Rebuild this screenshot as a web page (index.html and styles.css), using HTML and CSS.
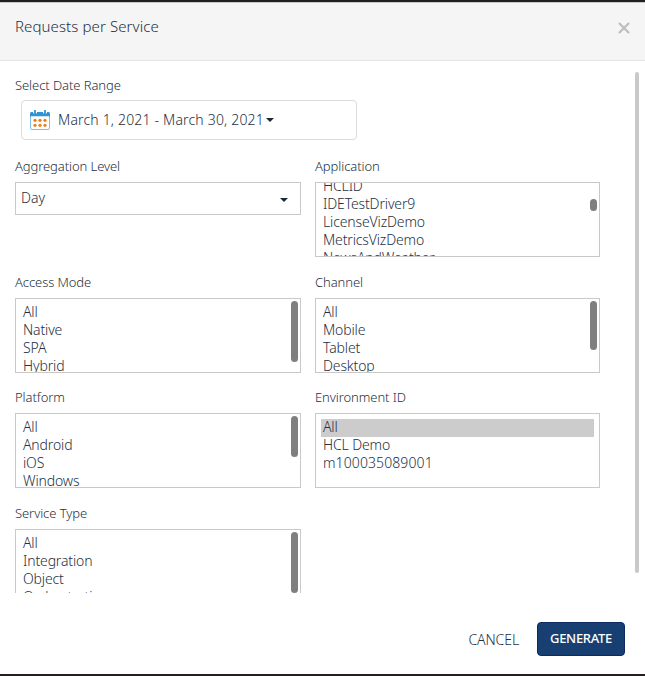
FILE: index.html
```html
<!DOCTYPE html>
<html lang="en">
<head>
<meta charset="utf-8">
<title>Requests per Service</title>
<link rel="stylesheet" href="styles.css">
</head>
<body>
<div class="dialog">
  <header class="header">
    <h1 class="title">Requests per Service</h1>
    <svg class="close" width="12" height="12" viewBox="0 0 12 12"><path d="M1.5 1.5l9 9M10.5 1.5l-9 9"/></svg>
  </header>
  <main class="body">
    <div class="form">
      <section class="range-field">
        <div class="label label-range">Select Date Range</div>
        <div class="range">
          <svg class="calendar" width="20" height="20" viewBox="0 0 20 20">
            <rect x=".5" y="2.5" width="19" height="17" rx="1.5" fill="#fff" stroke="#7fbdea"/>
            <path d="M0 6.2V3.5Q0 2 1.500 2h17Q20 2 20 3.500v2.700z" fill="#2f94d4"/>
            <path d="M5 .8v2.400M15 .8v2.400" stroke="#fff" stroke-width="4"/>
            <path d="M5 .8v2.400M15 .8v2.400" stroke="#3d9fda" stroke-width="2" stroke-linecap="round"/>
            <g fill="#ef7d1a"><circle cx="5" cy="10.300" r="1.600"/><circle cx="10" cy="10.300" r="1.600"/><circle cx="15" cy="10.300" r="1.600"/><circle cx="5" cy="15.300" r="1.600"/><circle cx="10" cy="15.300" r="1.600"/><circle cx="15" cy="15.300" r="1.600"/></g>
          </svg>
          <span class="range-text">March 1, 2021 - March 30, 2021</span>
          <span class="caret"></span>
        </div>
      </section>
      <div class="grid">
        <section class="field">
          <div class="label">Aggregation Level</div>
          <div class="select"><span class="select-text">Day</span><span class="caret"></span></div>
        </section>
        <section class="field">
          <div class="label">Application</div>
          <div class="list">
            <div class="options scrolled"><div>HCLID</div><div>IDETestDriver9</div><div>LicenseVizDemo</div><div>MetricsVizDemo</div><div>NewsAndWeather</div></div>
            <span class="thumb thumb-app"></span>
          </div>
        </section>
        <section class="field">
          <div class="label">Access Mode</div>
          <div class="list">
            <div class="options"><div>All</div><div>Native</div><div>SPA</div><div>Hybrid</div></div>
            <span class="thumb thumb-long"></span>
          </div>
        </section>
        <section class="field">
          <div class="label">Channel</div>
          <div class="list">
            <div class="options"><div>All</div><div>Mobile</div><div>Tablet</div><div>Desktop</div></div>
            <span class="thumb thumb-mid"></span>
          </div>
        </section>
        <section class="field">
          <div class="label">Platform</div>
          <div class="list">
            <div class="options"><div>All</div><div>Android</div><div>iOS</div><div>Windows</div></div>
            <span class="thumb thumb-short"></span>
          </div>
        </section>
        <section class="field">
          <div class="label">Environment ID</div>
          <div class="list">
            <div class="options full"><div class="selected">All</div><div>HCL Demo</div><div class="digits">m100035089001</div></div>
          </div>
        </section>
        <section class="field">
          <div class="label">Service Type</div>
          <div class="list">
            <div class="options"><div>All</div><div>Integration</div><div>Object</div><div>Orchestration</div></div>
            <span class="thumb thumb-long"></span>
          </div>
        </section>
      </div>
    </div>
    <span class="scrollbar"></span>
  </main>
  <footer class="footer">
    <span class="cancel">CANCEL</span>
    <span class="generate">GENERATE</span>
  </footer>
</div>
</body>
</html>
```

FILE: styles.css
```css
* { box-sizing: border-box; }
body {
  margin: 0;
  height: 676px;
  overflow: hidden;
  background: #231f20;
  color: #25303f;
  font-family: "Noto Sans", "Open Sans", sans-serif;
  font-weight: 300;
}
.dialog {
  display: flex;
  flex-direction: column;
  height: 676px;
  border-top: 2px solid #231f20;
  border-bottom: 2px solid #231f20;
  background: #fff;
}
.header {
  display: flex;
  justify-content: space-between;
  height: 59px;
  padding: 13px 15px 0;
  border-top: 1px solid #c8c8c8;
  border-bottom: 1px solid #e5e5e5;
  background: #f5f5f5;
}
.title {
  margin: 0;
  font-size: 15px;
  line-height: 20px;
  font-weight: 300;
  letter-spacing: .1px;
}
.close {
  margin: 6px 0 0;
  fill: none;
  stroke: #bdbdbd;
  stroke-width: 2;
  stroke-linecap: round;
}
.body {
  display: flex;
  justify-content: space-between;
  height: 532px;
  padding: 0 6px 0 15px;
  overflow: hidden;
}
.form { width: 585px; padding-top: 14px; }
.label {
  height: 20px;
  margin-bottom: 6px;
  font-size: 13px;
  line-height: 20px;
  letter-spacing: -.08px;
  white-space: nowrap;
}
.range {
  display: flex;
  align-items: center;
  width: 336px;
  height: 40px;
  margin: 0 0 15px 6px;
  padding-left: 8px;
  border: 1px solid #dcdcdc;
  border-radius: 4px;
}
.label-range { margin-bottom: 5px; }
.range { margin-bottom: 16px; }
.range-text {
  margin: -2px 2px 0 8px;
  font-size: 14px;
  letter-spacing: .18px;
  white-space: nowrap;
}
.caret {
  width: 0;
  border: 4px solid transparent;
  border-top-color: #1d2733;
  border-bottom-width: 0;
}
.grid {
  display: grid;
  grid-template-columns: 286px 285px;
  column-gap: 14px;
  grid-auto-rows: 115.5px;
}
.select {
  display: flex;
  align-items: center;
  justify-content: space-between;
  height: 33px;
  padding: 0 12px 0 5px;
  border: 1px solid #c9c9c9;
  font-size: 14px;
}
.select-text { margin-top: -2px; }
.select .caret { margin-top: 2px; }
.list {
  display: flex;
  justify-content: space-between;
  height: 75px;
  padding: 5px 2px 0 5px;
  border: 1px solid #c9c9c9;
  overflow: hidden;
}
.options {
  font-size: 14px;
  line-height: 16px;
  letter-spacing: -.14px;
  white-space: nowrap;
}
.options > div { height: 18px; padding-left: 2px; }
.options .digits { letter-spacing: .1px; }
.scrolled { margin-top: -10px; }
.full { flex: 1; margin-right: 3px; }
.selected { background: #ccc; }
.thumb {
  width: 7px;
  margin-top: -3px;
  border-radius: 4px;
  background: #7f7f7f;
}
.thumb-long { height: 61px; }
.thumb-mid { height: 49px; }
.thumb-short { height: 41px; }
.thumb-app { height: 12px; margin-top: 11px; }
.scrollbar {
  width: 4px;
  height: 501px;
  margin-top: 11px;
  border-radius: 2px;
  background: #c9c9c9;
}
.footer {
  display: flex;
  justify-content: flex-end;
  padding: 29px 20px 0 0;
  font-size: 14px;
}
.cancel { margin-right: 18px; line-height: 36px; letter-spacing: -.1px; }
.generate {
  width: 88px;
  height: 34px;
  border: 1px solid #0d2a63;
  border-radius: 4px;
  background: #173f72;
  color: #fff;
  font-size: 13px;
  font-weight: 500;
  letter-spacing: -.3px;
  line-height: 31px;
  text-align: center;
}
```
